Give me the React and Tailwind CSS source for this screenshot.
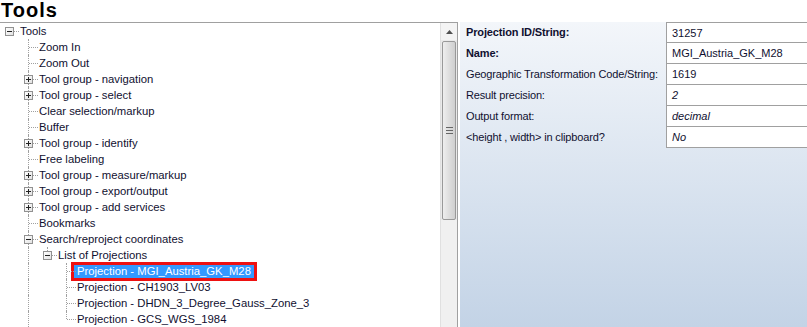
import React from 'react';

const tree = [
  { d: 0, label: 'Tools', exp: 'minus' },
  { d: 1, label: 'Zoom In' },
  { d: 1, label: 'Zoom Out' },
  { d: 1, label: 'Tool group - navigation', exp: 'plus' },
  { d: 1, label: 'Tool group - select', exp: 'plus' },
  { d: 1, label: 'Clear selection/markup' },
  { d: 1, label: 'Buffer' },
  { d: 1, label: 'Tool group - identify', exp: 'plus' },
  { d: 1, label: 'Free labeling' },
  { d: 1, label: 'Tool group - measure/markup', exp: 'plus' },
  { d: 1, label: 'Tool group - export/output', exp: 'plus' },
  { d: 1, label: 'Tool group - add services', exp: 'plus' },
  { d: 1, label: 'Bookmarks' },
  { d: 1, label: 'Search/reproject coordinates', exp: 'minus' },
  { d: 2, label: 'List of Projections', exp: 'minus', last: true },
  { d: 3, label: 'Projection - MGI_Austria_GK_M28', selected: true },
  { d: 3, label: 'Projection - CH1903_LV03' },
  { d: 3, label: 'Projection - DHDN_3_Degree_Gauss_Zone_3' },
  { d: 3, label: 'Projection - GCS_WGS_1984', last: true },
];

const props = [
  { label: 'Projection ID/String:', value: '31257', bold: true },
  { label: 'Name:', value: 'MGI_Austria_GK_M28', bold: true },
  { label: 'Geographic Transformation Code/String:', value: '1619' },
  { label: 'Result precision:', value: '2', italic: true },
  { label: 'Output format:', value: 'decimal', italic: true },
  { label: '<height , width> in clipboard?', value: 'No', italic: true },
];

function Expander({ type }) {
  return (
    <div className="w-[9px] h-[9px] border border-[#919191] bg-gradient-to-br from-white to-[#e2e2e2] flex items-center justify-center relative z-10">
      <svg width="7" height="7" viewBox="0 0 7 7">
        <rect x="1" y="3" width="5" height="1" fill="#222" />
        {type === 'plus' && <rect x="3" y="1" width="1" height="5" fill="#222" />}
      </svg>
    </div>
  );
}

// level-1 siblings continue past "Search/reproject coordinates"
function hasGuide(depth, level) {
  return depth >= 2 && level === 1;
}

function TreeRow({ node }) {
  const cells = [];
  for (let i = 0; i < node.d; i++) {
    cells.push(
      <div key={i} className="w-[19px] h-4 flex justify-center shrink-0">
        {hasGuide(node.d, i) && <div className="w-0 h-full border-l border-dotted border-[#a0a0a0]" />}
      </div>
    );
  }
  const isRoot = node.d === 0;
  return (
    <div className="flex h-4 items-center">
      {cells}
      <div className="relative w-[19px] h-4 shrink-0 flex items-center justify-center">
        {!isRoot && (
          <div
            className={`absolute left-[9px] top-0 w-0 border-l border-dotted border-[#a0a0a0] ${node.last ? 'h-[8px]' : 'h-4'}`}
          />
        )}
        <div className="absolute left-[10px] top-[8px] w-[9px] h-0 border-t border-dotted border-[#a0a0a0]" />
        {node.exp && <Expander type={node.exp} />}
      </div>
      {node.selected ? (
        <span className="ml-[-2px] h-[13px] px-[3px] leading-[13px] bg-[#3399ff] text-white outline-[3px] outline-solid outline-[#ee1111] whitespace-nowrap">
          {node.label}
        </span>
      ) : (
        <span className="pl-[1px] leading-4 text-[#101030] whitespace-nowrap">{node.label}</span>
      )}
    </div>
  );
}

export default function App() {
  return (
    <div
      className="w-[807px] h-[327px] bg-white overflow-hidden flex flex-col"
      style={{ fontFamily: '"Liberation Sans", Arial, sans-serif' }}
    >
      <div className="h-[22px] shrink-0 pl-[1px] text-[20px] tracking-[1px] font-bold leading-[20px] text-black">Tools</div>
      <div className="flex flex-1 min-h-0">
        {/* tree */}
        <div className="w-[458px] shrink-0 border-t border-r border-[#a0a0a0] flex min-h-0 text-[11.3px]">
          <div className="flex-1 overflow-hidden">
            {tree.map((n, i) => (
              <TreeRow key={i} node={n} />
            ))}
          </div>
          {/* scrollbar */}
          <div className="w-[17px] shrink-0 bg-[#eaeaea] border-l border-[#e0e0e0] flex flex-col">
            <div className="h-[17px] flex items-center justify-center bg-[#f4f4f4]">
              <svg width="7" height="4" viewBox="0 0 7 4">
                <path d="M0 4 L3.5 0 L7 4 Z" fill="#505050" />
              </svg>
            </div>
            <div className="mx-[1px] mt-[1px] h-[179px] rounded-[2px] border border-[#999] bg-gradient-to-r from-[#eeeeee] via-[#dedede] to-[#cfcfcf] flex items-center justify-center">
              <svg width="7" height="7" viewBox="0 0 7 7">
                <rect x="0" y="0" width="7" height="1" fill="#666" />
                <rect x="0" y="3" width="7" height="1" fill="#666" />
                <rect x="0" y="6" width="7" height="1" fill="#666" />
              </svg>
            </div>
            <div className="flex-1 bg-[#f0f0f0]" />
          </div>
        </div>
        {/* property grid */}
        <div className="flex-1 ml-[2px] bg-gradient-to-b from-[#f3f6fa] to-[#c3d3e6] text-[11px]">
          {props.map((p, i) => (
            <div key={i} className="flex h-[21px] items-center">
              <div className={`w-[206px] shrink-0 pl-[6px] tracking-[-0.15px] text-[#101030] whitespace-nowrap ${p.bold ? 'font-bold' : ''}`}>
                {p.label}
              </div>
              <div
                className={`flex-1 h-[21px] bg-white border-l border-b border-[#a0a0a0] ${i === 0 ? 'border-t' : ''} pl-[5px] leading-[20px] text-[#101030] ${p.italic ? 'italic' : ''}`}
              >
                {p.value}
              </div>
            </div>
          ))}
        </div>
      </div>
    </div>
  );
}
